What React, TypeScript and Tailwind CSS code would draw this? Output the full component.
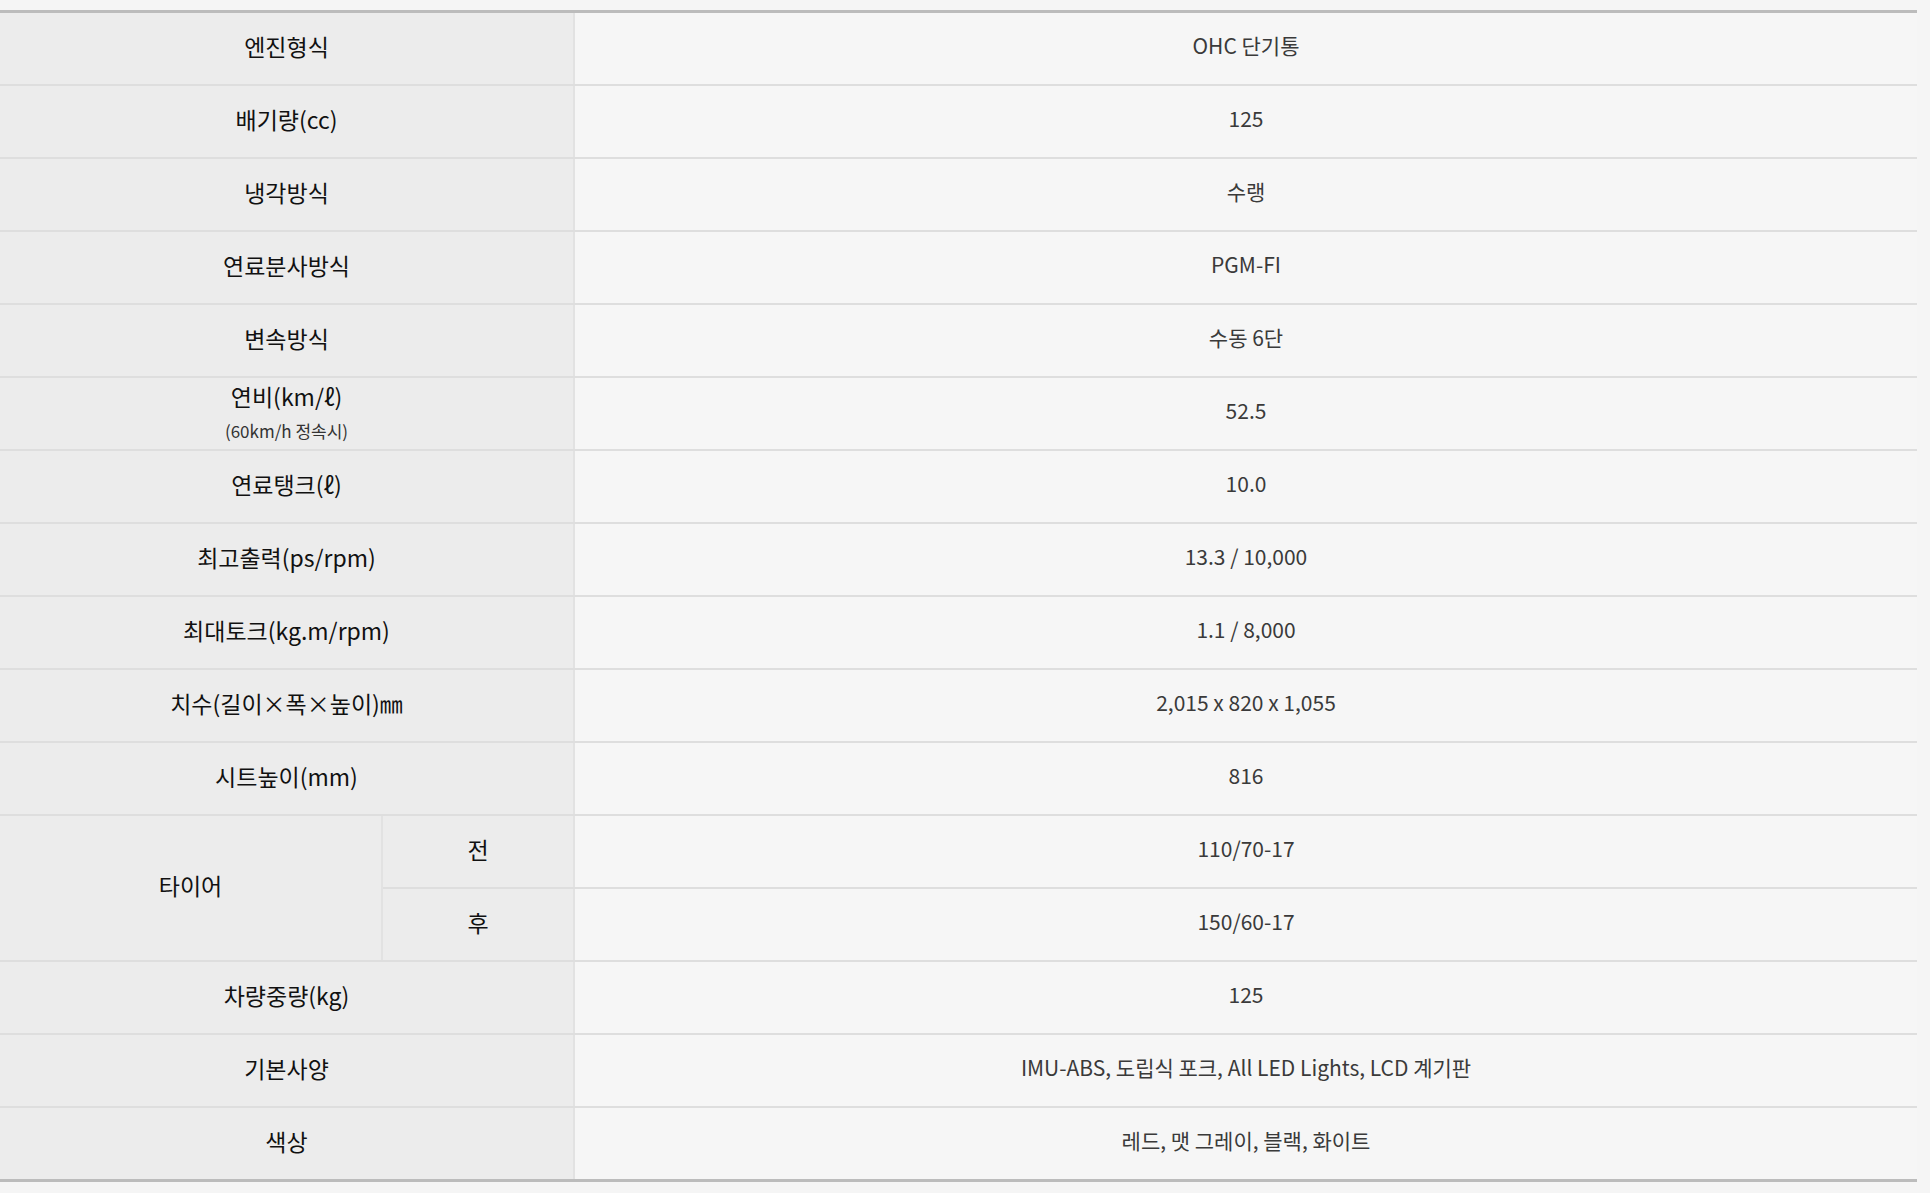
const FONT = "font-['Noto_Sans_CJK_KR','Noto_Sans',sans-serif]";

type SpecRow = { label: string; sub?: string; value: string };

const TOP_ROWS: SpecRow[] = [
  { label: '엔진형식', value: 'OHC 단기통' },
  { label: '배기량(cc)', value: '125' },
  { label: '냉각방식', value: '수랭' },
  { label: '연료분사방식', value: 'PGM-FI' },
  { label: '변속방식', value: '수동 6단' },
  { label: '연비(km/ℓ)', sub: '(60km/h 정속시)', value: '52.5' },
  { label: '연료탱크(ℓ)', value: '10.0' },
  { label: '최고출력(ps/rpm)', value: '13.3 / 10,000' },
  { label: '최대토크(kg.m/rpm)', value: '1.1 / 8,000' },
  { label: '치수(길이×폭×높이)㎜', value: '2,015 x 820 x 1,055' },
  { label: '시트높이(mm)', value: '816' }
];

const BOTTOM_ROWS: SpecRow[] = [
  { label: '차량중량(kg)', value: '125' },
  { label: '기본사양', value: 'IMU-ABS, 도립식 포크, All LED Lights, LCD 계기판' },
  { label: '색상', value: '레드, 맷 그레이, 블랙, 화이트' }
];

const HEAD = 'bg-[#ececec] border-r-2 border-[#e2e2e2] flex items-center justify-center pb-[5px] text-[23px] text-[#111]';
const VAL = 'flex-1 flex items-center justify-center pb-[5px] text-[21px] text-[#3a3a3a]';

function Row({ row, last }: { row: SpecRow; last?: boolean }) {
  return (
    <div className={`flex ${last ? 'h-[71px]' : 'h-[73px] border-b-2 border-[#dedede]'}`}>
      {row.sub ? (
        <div className="w-[575px] shrink-0 bg-[#ececec] border-r-2 border-[#e2e2e2] flex flex-col items-center justify-center pb-[4px]">
          <span className="text-[23px] leading-[30px] text-[#111]">{row.label}</span>
          <span className="text-[17px] leading-[22px] text-[#333] mt-[9px]">{row.sub}</span>
        </div>
      ) : (
        <div className={`w-[575px] shrink-0 ${HEAD}`}>{row.label}</div>
      )}
      <div className={VAL}>{row.value}</div>
    </div>
  );
}

export default function App() {
  return (
    <div className={`min-h-screen bg-[#f5f5f5] pt-[10px] ${FONT}`}>
      <div className="w-[1917px] border-t-[3px] border-b-[3px] border-[#bcbcbc] bg-[#f6f6f6]">
        {TOP_ROWS.map((r) => (
          <Row key={r.label} row={r} />
        ))}

        {/* 타이어: 전/후 */}
        <div className="flex h-[146px] border-b-2 border-[#dedede]">
          <div className={`w-[383px] shrink-0 ${HEAD}`}>타이어</div>
          <div className="flex-1 flex flex-col">
            {[
              ['전', '110/70-17'],
              ['후', '150/60-17']
            ].map(([k, v], i) => (
              <div key={k} className={`flex ${i === 0 ? 'h-[73px] border-b-2 border-[#dedede]' : 'h-[71px]'}`}>
                <div className={`w-[192px] shrink-0 ${HEAD}`}>{k}</div>
                <div className={VAL}>{v}</div>
              </div>
            ))}
          </div>
        </div>

        {BOTTOM_ROWS.map((r, i) => (
          <Row key={r.label} row={r} last={i === BOTTOM_ROWS.length - 1} />
        ))}
      </div>
    </div>
  );
}
